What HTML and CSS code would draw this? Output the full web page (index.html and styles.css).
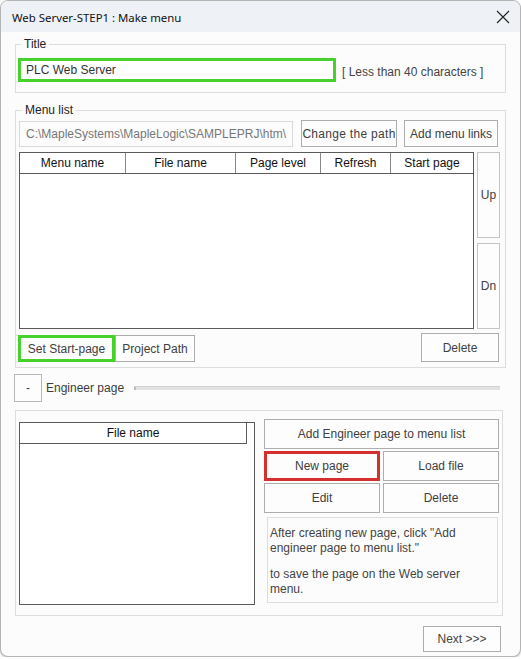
FILE: index.html
```html
<!DOCTYPE html>
<html lang="en">
<head>
    <meta charset="UTF-8">
    <meta name="viewport" content="width=device-width, initial-scale=1.0">
    <title>Web Server-STEP1 : Make menu</title>
    <link rel="stylesheet" href="styles.css">
</head>
<body>
    <div class="window">
        <div class="titlebar">
            <span class="caption">Web Server-STEP1 : Make menu</span>
            <svg class="close" width="14" height="14" viewBox="0 0 14 14">
                <path d="M1 1 L13 13 M13 1 L1 13" stroke="#222" stroke-width="1.1" fill="none"/>
            </svg>
        </div>

        <div class="content">
            <fieldset class="group group-title">
                <legend>Title</legend>
                <div class="title-row">
                    <div class="field field-active">PLC Web Server</div>
                    <span class="hint">[ Less than 40 characters ]</span>
                </div>
            </fieldset>

            <fieldset class="group group-menu">
                <legend>Menu list</legend>
                <div class="path-row">
                    <div class="field field-path">C:\MapleSystems\MapleLogic\SAMPLEPRJ\htm\</div>
                    <button class="btn btn-change">Change the path</button>
                    <button class="btn btn-links">Add menu links</button>
                </div>
                <div class="list-row">
                    <div class="list menu-list">
                        <div class="list-head">
                            <span class="col col-menu">Menu name</span>
                            <span class="col col-file">File name</span>
                            <span class="col col-level">Page level</span>
                            <span class="col col-refresh">Refresh</span>
                            <span class="col col-start">Start page</span>
                        </div>
                    </div>
                    <div class="order-btns">
                        <button class="btn btn-up">Up</button>
                        <button class="btn btn-dn">Dn</button>
                    </div>
                </div>
                <div class="action-row">
                    <button class="btn btn-start">Set Start-page</button>
                    <button class="btn btn-project">Project Path</button>
                    <button class="btn btn-delete">Delete</button>
                </div>
            </fieldset>

            <div class="engineer-bar">
                <button class="btn btn-toggle">-</button>
                <span class="engineer-label">Engineer page</span>
                <div class="slider"><div class="knob"></div></div>
            </div>

            <div class="engineer-box">
                <div class="list file-list">
                    <div class="list-head">
                        <span class="col col-filename">File name</span>
                    </div>
                </div>
                <div class="engineer-actions">
                    <button class="btn btn-wide">Add Engineer page to menu list</button>
                    <div class="btn-grid">
                        <button class="btn btn-new">New page</button>
                        <button class="btn">Load file</button>
                        <button class="btn">Edit</button>
                        <button class="btn">Delete</button>
                    </div>
                    <div class="note">
                        <p>After creating new page, click "Add engineer page to menu list."</p>
                        <p>to save the page on the Web server menu.</p>
                    </div>
                </div>
            </div>

            <div class="footer">
                <button class="btn btn-next">Next &gt;&gt;&gt;</button>
            </div>
        </div>
    </div>
</body>
</html>
```

FILE: styles.css
```css
html {
    background: #ffffff;
}
body {
    margin: 0;
    padding: 0;
    font-family: 'Liberation Sans', Arial, sans-serif;
    font-size: 12px;
    color: #3c3c3c;
}
.window {
    width: 521px;
    height: 657px;
    box-sizing: border-box;
    border: 1px solid #b4b4b4;
    border-radius: 8px;
    background: #fcfcfc;
    overflow: hidden;
    box-shadow: 0 1px 2px rgba(0, 0, 0, 0.25);
}
.titlebar {
    height: 30px;
    background: #eef2f7;
    display: flex;
    align-items: center;
    justify-content: space-between;
    padding: 1px 10px 0 11px;
}
.caption {
    font-family: 'Noto Sans', sans-serif;
    font-size: 11.4px;
    color: #111;
}
.content {
    padding: 5px 14px 0 14px;
}
.group {
    margin: 0;
    border: 1px solid #dcdcdc;
    min-width: 0;
}
.group legend {
    padding: 0 3px;
    margin-left: 3px;
    line-height: 14px;
    color: #222;
}
.group-title {
    padding: 7px 3px 10px 2px;
}
.title-row {
    display: flex;
    align-items: center;
}
.field {
    box-sizing: border-box;
    white-space: nowrap;
    overflow: hidden;
}
.field-active {
    width: 318px;
    height: 24px;
    border: 3px solid #46d12b;
    background: #fff;
    padding: 2px 5px;
    line-height: 14px;
    color: #333;
}
.hint {
    margin-left: 6px;
    margin-top: 4px;
    color: #444;
}
.group-menu {
    margin-top: 10px;
    padding: 3px 5px 5px 3px;
}
.path-row {
    display: flex;
    align-items: flex-start;
}
.field-path {
    width: 274px;
    height: 26px;
    margin-top: 1px;
    border: 1px solid #d9d9d9;
    padding: 5px 6px;
    line-height: 14px;
    color: #777;
}
.btn {
    font-family: inherit;
    font-size: 12px;
    color: #404040;
    background: #fdfdfd;
    border: 1px solid #adadad;
    padding: 0;
    margin: 0;
    white-space: nowrap;
    overflow: hidden;
}
.btn-change {
    width: 96px;
    height: 27px;
    margin-left: 8px;
    letter-spacing: 0.3px;
}
.btn-links {
    width: 94px;
    height: 27px;
    margin-left: 7px;
}
.list-row {
    display: flex;
    margin-top: 5px;
}
.list {
    box-sizing: border-box;
    border: 1px solid #5a5a5a;
    background: #fff;
}
.menu-list {
    width: 456px;
    height: 177px;
}
.list-head {
    display: flex;
    height: 21px;
    border-bottom: 1px solid #5a5a5a;
    box-sizing: border-box;
    color: #111;
}
.col {
    box-sizing: border-box;
    text-align: center;
    line-height: 20px;
    border-right: 1px solid #888;
}
.col-menu { width: 106px; }
.col-file { width: 110px; }
.col-level { width: 85px; }
.col-refresh { width: 70px; }
.col-start { width: 82px; border-right: none; }
.order-btns {
    display: flex;
    flex-direction: column;
    gap: 5px;
    margin-left: 3px;
}
.btn-up,
.btn-dn {
    width: 23px;
    height: 86px;
    border-color: #c4c4c4;
}
.action-row {
    display: flex;
    align-items: flex-end;
    margin-top: 4px;
}
.btn-start {
    width: 97px;
    height: 27px;
    margin-left: -1px;
    border: 3px solid #46d12b;
}
.btn-project {
    width: 80px;
    height: 27px;
}
.btn-delete {
    width: 78px;
    height: 29px;
    margin-left: auto;
    margin-right: 1px;
}
.engineer-bar {
    display: flex;
    align-items: center;
    margin-top: 6px;
}
.btn-toggle {
    width: 28px;
    height: 28px;
    margin-left: -1px;
    border-color: #b8b8b8;
}
.engineer-label {
    margin-left: 4px;
}
.slider {
    flex: 1;
    height: 3px;
    margin: 0 6px 0 10px;
    background: #e2e2e2;
    border-top: 1px solid #d2d2d2;
    display: flex;
}
.knob {
    width: 2px;
    background: #bdbdbd;
}
.engineer-box {
    display: flex;
    margin-top: 8px;
    margin-right: 3px;
    border: 1px solid #dcdcdc;
    padding: 8px 3px 10px 3px;
}
.file-list {
    width: 236px;
    height: 183px;
    margin-top: 3px;
}
.file-list .list-head {
    width: 227px;
    border-right: 1px solid #5a5a5a;
}
.col-filename {
    flex: 1;
    border-right: none;
}
.engineer-actions {
    flex: 1;
    margin-left: 9px;
    display: flex;
    flex-direction: column;
}
.btn-wide {
    height: 30px;
}
.btn-grid {
    display: grid;
    grid-template-columns: 116px 1fr;
    grid-auto-rows: 30px;
    column-gap: 3px;
    row-gap: 2px;
    margin-top: 2px;
}
.btn-new {
    border: 3px solid #d62f2f;
}
.note {
    margin: 4px 1px 0 3px;
    height: 86px;
    box-sizing: border-box;
    border: 1px solid #dedede;
    padding: 8px 2px 0 2px;
    color: #444;
    line-height: 15px;
}
.note p {
    margin: 0 0 11px 0;
}
.footer {
    display: flex;
    justify-content: flex-end;
    margin-top: 10px;
    padding-right: 5px;
}
.btn-next {
    width: 78px;
    height: 26px;
    color: #444;
}
```
